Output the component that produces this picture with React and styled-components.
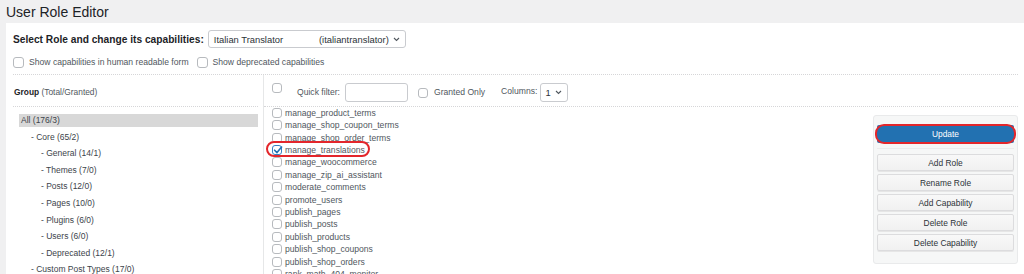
import React from "react";
import styled, { createGlobalStyle } from "styled-components";

const GlobalStyle = createGlobalStyle`
  html, body {
    margin: 0;
    padding: 0;
    background: #f0f0f1;
    overflow: hidden;
  }
  body {
    font-family: "Liberation Sans", Arial, sans-serif;
    color: #3c434a;
  }
  * { box-sizing: border-box; }
`;

const Page = styled.div`
  height: 274px;
  overflow: hidden;
  padding-left: 6px;
`;

const Title = styled.h1`
  margin: 0;
  height: 23px;
  padding-top: 1px;
  font-size: 14px;
  line-height: 22px;
  font-weight: 400;
  color: #1d2327;
`;

const Panel = styled.div`
  background: #fff;
  height: 251px;
  overflow: hidden;
  padding: 0 6px 0 7px;
`;

const TopSection = styled.div`
  padding-top: 7px;
  padding-bottom: 6px;
  border-bottom: 1px dotted #d6d6d8;
`;

const SelectRow = styled.div`
  display: flex;
  align-items: center;
  gap: 4px;
  height: 18px;
`;

const BoldLabel = styled.span`
  font-size: 10.2px;
  font-weight: 700;
  color: #1d2327;
  white-space: nowrap;
`;

const SelectBox = styled.div`
  width: ${(p) => p.$width}px;
  height: ${(p) => p.$height}px;
  border: 1px solid #c9cbcf;
  border-radius: 3px;
  background: #fff;
  display: flex;
  align-items: center;
  justify-content: space-between;
  padding: 0 5px 0 ${(p) => p.$padLeft}px;
  font-size: ${(p) => p.$font}px;
  color: #2c3338;
  white-space: nowrap;
  flex-shrink: 0;
`;

const SelectText = styled.span`
  flex: ${(p) => (p.$grow ? 1 : "none")};
`;

const OptionsRow = styled.div`
  display: flex;
  align-items: center;
  margin-top: 8px;
  height: 12px;
`;

const OptionLabel = styled.label`
  display: flex;
  align-items: center;
  gap: 5px;
  font-size: 8.6px;
  color: #50575e;
  margin-right: ${(p) => p.$gapAfter || 0}px;
  white-space: nowrap;
`;

const Box = styled.span`
  position: relative;
  display: inline-block;
  flex-shrink: 0;
  width: ${(p) => p.$size}px;
  height: ${(p) => p.$size}px;
  border: 1px solid ${(p) => (p.$checked ? "#3582c4" : "#b7babe")};
  border-radius: 3px;
  background: #fff;
  margin-top: ${(p) => p.$mt || 0}px;
  svg {
    position: absolute;
    left: -1px;
    top: -2px;
  }
`;

const Main = styled.div`
  display: flex;
  height: 199px;
`;

const LeftCol = styled.div`
  width: 251px;
  flex-shrink: 0;
  padding-right: 5px;
  border-right: 1px solid #e6e7e8;
  overflow: hidden;
`;

const ColHeader = styled.div`
  height: 32px;
  flex-shrink: 0;
  border-bottom: 1px dotted #d6d6d8;
  display: flex;
  align-items: ${(p) => (p.$top ? "flex-start" : "center")};
  padding: ${(p) => (p.$top ? "8px 0 0 8px" : "3px 0 0 1px")};
`;

const GroupTitle = styled.span`
  font-size: 8.4px;
  color: #50575e;
  b {
    font-weight: 700;
    color: #1d2327;
  }
`;

const Tree = styled.div`
  padding: 7px 0 0 6px;
`;

const TreeItem = styled.div`
  height: 13px;
  line-height: 13px;
  margin-bottom: 3.6px;
  padding-left: ${(p) => 2 + p.$level * 10}px;
  font-size: 8.5px;
  color: #3c434a;
  background: ${(p) => (p.$active ? "#d8d8d8" : "transparent")};
  white-space: nowrap;
`;

const MiddleCol = styled.div`
  flex: 1;
  display: flex;
  flex-direction: column;
  min-width: 0;
`;

const HeaderText = styled.span`
  font-size: 8.6px;
  color: #50575e;
  line-height: ${(p) => p.$lh || 19}px;
  margin-left: ${(p) => p.$ml || 0}px;
  white-space: nowrap;
`;

const FilterInput = styled.div`
  width: 63px;
  height: 19px;
  margin-left: ${(p) => p.$ml}px;
  border: 1px solid #c9cbcf;
  border-radius: 3px;
  background: #fff;
`;

const Spacer = styled.div`
  margin-left: ${(p) => p.$ml}px;
  display: flex;
`;

const Body = styled.div`
  flex: 1;
  display: flex;
  min-height: 0;
`;

const CapList = styled.div`
  flex: 1;
  overflow: hidden;
`;

const CapInner = styled.div`
  margin-top: -0.5px;
`;

const CapRow = styled.div`
  position: relative;
  height: 12.42px;
  display: flex;
  align-items: center;
  gap: 3px;
  padding-left: 8px;
  font-size: 8.6px;
  color: #50575e;
  white-space: nowrap;
`;

const Ring = styled.span`
  position: absolute;
  left: ${(p) => p.$left}px;
  top: ${(p) => p.$top}px;
  width: ${(p) => p.$w}px;
  height: ${(p) => p.$h}px;
  border: 2px solid #e3262b;
  border-radius: ${(p) => p.$r}px;
  pointer-events: none;
`;

const SidePanel = styled.div`
  width: 145px;
  flex-shrink: 0;
  align-self: flex-start;
  margin-top: 8px;
  background: #f6f7f7;
  border: 1px solid #e9eaeb;
  border-radius: 3px;
  padding: 9px 3px 12px 3px;
`;

const PrimaryWrap = styled.div`
  position: relative;
`;

const PrimaryButton = styled.div`
  height: 18px;
  background: #2271b1;
  border-radius: 2px;
  color: #fff;
  font-size: 8.4px;
  display: flex;
  align-items: center;
  justify-content: center;
`;

const Divider = styled.div`
  height: 1px;
  background: #ebebec;
  margin: 5px 0 5px;
`;

const ActionButton = styled.div`
  height: 17px;
  margin-bottom: 3px;
  background: linear-gradient(#f8f8f8, #f1f1f1);
  border: 1px solid #dcdcde;
  border-radius: 2px;
  box-shadow: 0 1px 0 #e6e6e6;
  color: #2c3338;
  font-size: 8.4px;
  display: flex;
  align-items: center;
  justify-content: center;
  &:last-child {
    margin-bottom: 0;
  }
`;

const Chevron = () => (
  <svg width="7" height="5" viewBox="0 0 7 5">
    <polyline points="1,1 3.5,3.5 6,1" fill="none" stroke="#50575e" strokeWidth="1.1" />
  </svg>
);

const Checkbox = ({ size = 10, checked, mt }) => (
  <Box $size={size} $checked={checked} $mt={mt}>
    {checked && (
      <svg width="12" height="12" viewBox="0 0 12 12">
        <polyline
          points="2.6,6.2 5,8.6 9.6,3"
          fill="none"
          stroke="#2271b1"
          strokeWidth="1.6"
          strokeLinecap="round"
          strokeLinejoin="round"
        />
      </svg>
    )}
  </Box>
);

const tree = [
  { label: "All (176/3)", level: 0, active: true },
  { label: "- Core (65/2)", level: 1 },
  { label: "- General (14/1)", level: 2 },
  { label: "- Themes (7/0)", level: 2 },
  { label: "- Posts (12/0)", level: 2 },
  { label: "- Pages (10/0)", level: 2 },
  { label: "- Plugins (6/0)", level: 2 },
  { label: "- Users (6/0)", level: 2 },
  { label: "- Deprecated (12/1)", level: 2 },
  { label: "- Custom Post Types (17/0)", level: 1 },
];

const caps = [
  "manage_product_terms",
  "manage_shop_coupon_terms",
  "manage_shop_order_terms",
  "manage_translations",
  "manage_woocommerce",
  "manage_zip_ai_assistant",
  "moderate_comments",
  "promote_users",
  "publish_pages",
  "publish_posts",
  "publish_products",
  "publish_shop_coupons",
  "publish_shop_orders",
  "rank_math_404_monitor",
];

const actions = ["Add Role", "Rename Role", "Add Capability", "Delete Role", "Delete Capability"];

export default function App() {
  return (
    <>
      <GlobalStyle />
      <Page>
        <Title>User Role Editor</Title>
        <Panel>
          <TopSection>
            <SelectRow>
              <BoldLabel>Select Role and change its capabilities:</BoldLabel>
              <SelectBox $width={198} $height={18} $padLeft={5} $font={9.4}>
                <SelectText $grow>Italian Translator</SelectText>
                <SelectText>(italiantranslator)</SelectText>
                <span style={{ width: 4 }} />
                <Chevron />
              </SelectBox>
            </SelectRow>
            <OptionsRow>
              <OptionLabel $gapAfter={8}>
                <Checkbox size={11} />
                Show capabilities in human readable form
              </OptionLabel>
              <OptionLabel>
                <Checkbox size={11} />
                Show deprecated capabilities
              </OptionLabel>
            </OptionsRow>
          </TopSection>
          <Main>
            <LeftCol>
              <ColHeader>
                <GroupTitle>
                  <b>Group</b> (Total/Granted)
                </GroupTitle>
              </ColHeader>
              <Tree>
                {tree.map((t) => (
                  <TreeItem key={t.label} $level={t.level} $active={t.active}>
                    {t.label}
                  </TreeItem>
                ))}
              </Tree>
            </LeftCol>
            <MiddleCol>
              <ColHeader $top>
                <Checkbox size={10} />
                <HeaderText $ml={15}>Quick filter:</HeaderText>
                <FilterInput $ml={5} />
                <Spacer $ml={10}>
                  <Checkbox size={10} mt={5} />
                </Spacer>
                <HeaderText $ml={6}>Granted Only</HeaderText>
                <HeaderText $ml={16} $lh={17}>Columns:</HeaderText>
                <Spacer $ml={3}>
                  <SelectBox $width={28} $height={19} $padLeft={4} $font={9.4}>
                    <SelectText>1</SelectText>
                    <Chevron />
                  </SelectBox>
                </Spacer>
              </ColHeader>
              <Body>
                <CapList>
                  <CapInner>
                    {caps.map((c) => {
                      const checked = c === "manage_translations";
                      return (
                        <CapRow key={c}>
                          <Checkbox size={10} checked={checked} />
                          {c}
                          {checked && <Ring $left={2} $top={-2.3} $w={104} $h={16} $r={8} />}
                        </CapRow>
                      );
                    })}
                  </CapInner>
                </CapList>
                <SidePanel>
                  <PrimaryWrap>
                    <PrimaryButton>Update</PrimaryButton>
                    <Ring $left={-2} $top={-1} $w={141} $h={20} $r={9} />
                  </PrimaryWrap>
                  <Divider />
                  {actions.map((a) => (
                    <ActionButton key={a}>{a}</ActionButton>
                  ))}
                </SidePanel>
              </Body>
            </MiddleCol>
          </Main>
        </Panel>
      </Page>
    </>
  );
}
